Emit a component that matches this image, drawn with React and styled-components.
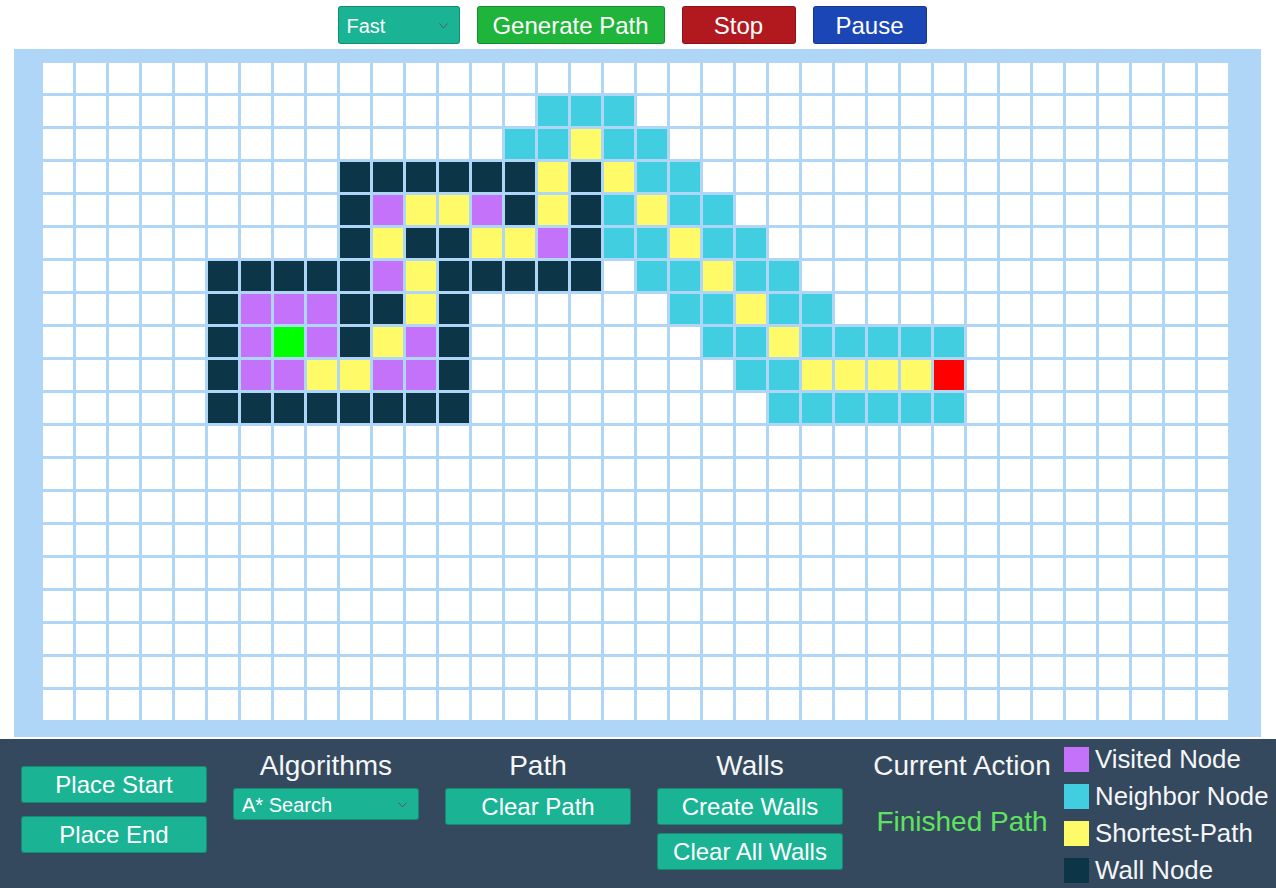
import React from "react";
import styled, { createGlobalStyle } from "styled-components";

const GlobalStyle = createGlobalStyle`
  html, body {
    margin: 0;
    padding: 0;
    background: #ffffff;
    font-family: "Liberation Sans", Arial, sans-serif;
    overflow: hidden;
  }
`;

const COLORS = {
  ".": "#ffffff",
  W: "#0c3547",
  V: "#c472fa",
  N: "#40cee0",
  P: "#fefa68",
  S: "#00ff00",
  E: "#ff0000",
};

const d = (n) => ".".repeat(n);

const ROWS = [
  d(36),
  `${d(15)}NNN${d(18)}`,
  `${d(14)}NNPNN${d(17)}`,
  `${d(9)}WWWWWWPWPNN${d(16)}`,
  `${d(9)}WVPPVWPWNPNN${d(15)}`,
  `${d(9)}WPWWPPVWNNPNN${d(14)}`,
  `${d(5)}WWWWWVPWWWWW.NNPNN${d(13)}`,
  `${d(5)}WVVVWWPW${d(6)}NNPNN${d(12)}`,
  `${d(5)}WVSVWPVW${d(7)}NNPNNNNN${d(8)}`,
  `${d(5)}WVVPPVVW${d(8)}NNPPPPE${d(8)}`,
  `${d(5)}WWWWWWWW${d(9)}NNNNNN${d(8)}`,
  ...Array.from({ length: 9 }, () => d(36)),
];

const TopBar = styled.div`
  height: 49px;
  display: flex;
  align-items: flex-start;
  justify-content: center;
  padding: 6px 12px 0 0;
  box-sizing: border-box;
  gap: 17px;
`;

const SelectWrap = styled.div`
  position: relative;
  width: ${(p) => p.$w}px;
  height: ${(p) => p.$h}px;
`;

const Select = styled.select`
  appearance: none;
  width: 100%;
  height: 100%;
  box-sizing: border-box;
  background: #1ab394;
  color: #ffffff;
  border: 1px solid rgba(0, 0, 0, 0.22);
  border-radius: 3px;
  font-family: "Liberation Sans", Arial, sans-serif;
  font-size: 20px;
  padding: 1px 0 0 8px;
  outline: none;
`;

const Chevron = styled.svg`
  position: absolute;
  right: 12px;
  top: 50%;
  width: 9px;
  height: 6px;
  margin-top: -2px;
  pointer-events: none;
`;

const TopButton = styled.button`
  height: 38px;
  width: ${(p) => p.$w}px;
  box-sizing: border-box;
  background: ${(p) => p.$bg};
  color: #ffffff;
  border: 1px solid rgba(0, 0, 0, 0.22);
  border-radius: 3px;
  font-family: "Liberation Sans", Arial, sans-serif;
  font-size: 24px;
  padding: 2px 0 0;
`;

const Board = styled.div`
  margin: 0 15px 0 14px;
  background: #afd6f6;
  padding: 14px 33px 17px 29px;
`;

const Grid = styled.div`
  display: grid;
  grid-template-columns: repeat(36, 30px);
  grid-auto-rows: 30px;
  gap: 3px;
`;

const Cell = styled.div`
  background: ${(p) => COLORS[p.$kind]};
`;

const Panel = styled.div`
  margin-top: 2px;
  height: 149px;
  background: #34495e;
  display: flex;
  gap: 9px;
  padding-left: 21px;
  box-sizing: border-box;
`;

const Controls = styled.div`
  display: flex;
  gap: 26px;
`;

const Column = styled.div`
  width: 186px;
  display: flex;
  flex-direction: column;
  align-items: center;
  padding-top: ${(p) => p.$top || 11}px;
  gap: ${(p) => p.$gap || 0}px;
`;

const Heading = styled.div`
  color: #f4f6f7;
  font-size: 28px;
  line-height: 32px;
  white-space: nowrap;
  margin-bottom: 6px;
`;

const Status = styled.div`
  color: #5fe35f;
  font-size: 28px;
  line-height: 32px;
  margin-top: 18px;
  white-space: nowrap;
`;

const PanelButton = styled.button`
  width: 186px;
  height: 37px;
  box-sizing: border-box;
  background: #1ab394;
  color: #ffffff;
  border: 1px solid rgba(0, 0, 0, 0.22);
  border-radius: 3px;
  font-family: "Liberation Sans", Arial, sans-serif;
  font-size: 24px;
  padding: 1px 0 0;
`;

const Legend = styled.div`
  display: flex;
  flex-direction: column;
  gap: 12px;
  padding-top: 8px;
`;

const LegendRow = styled.div`
  display: flex;
  align-items: center;
  gap: 6px;
  height: 25px;
  color: #f4f6f7;
  font-size: 25.8px;
  white-space: nowrap;
`;

const Swatch = styled.span`
  width: 25px;
  height: 25px;
  background: ${(p) => p.$color};
`;

const DropDown = ({ value, w, h }) => (
  <SelectWrap $w={w} $h={h}>
    <Select value={value} onChange={() => {}}>
      <option>{value}</option>
    </Select>
    <Chevron viewBox="0 0 9 6">
      <path d="M0.5 0.5 L4.5 5 L8.5 0.5" fill="none" stroke="#5a5a5a" strokeWidth="1" />
    </Chevron>
  </SelectWrap>
);

export default function App() {
  return (
    <>
      <GlobalStyle />
      <TopBar>
        <DropDown value="Fast" w={122} h={38} />
        <TopButton $w={188} $bg="#1fb53a">Generate Path</TopButton>
        <TopButton $w={114} $bg="#b1191f">Stop</TopButton>
        <TopButton $w={114} $bg="#1b47b6">Pause</TopButton>
      </TopBar>
      <Board>
        <Grid>
          {ROWS.map((row, r) =>
            row.split("").map((k, c) => <Cell key={`${r}-${c}`} $kind={k} />)
          )}
        </Grid>
      </Board>
      <Panel>
        <Controls>
          <Column $top={27} $gap={13}>
            <PanelButton>Place Start</PanelButton>
            <PanelButton>Place End</PanelButton>
          </Column>
          <Column>
            <Heading>Algorithms</Heading>
            <DropDown value="A* Search" w={186} h={32} />
          </Column>
          <Column>
            <Heading>Path</Heading>
            <PanelButton>Clear Path</PanelButton>
          </Column>
          <Column>
            <Heading>Walls</Heading>
            <PanelButton>Create Walls</PanelButton>
            <PanelButton style={{ marginTop: 8 }}>Clear All Walls</PanelButton>
          </Column>
          <Column>
            <Heading>Current Action</Heading>
            <Status>Finished Path</Status>
          </Column>
        </Controls>
        <Legend>
          <LegendRow><Swatch $color={COLORS.V} />Visited Node</LegendRow>
          <LegendRow><Swatch $color={COLORS.N} />Neighbor Node</LegendRow>
          <LegendRow><Swatch $color={COLORS.P} />Shortest-Path</LegendRow>
          <LegendRow><Swatch $color={COLORS.W} />Wall Node</LegendRow>
        </Legend>
      </Panel>
    </>
  );
}
